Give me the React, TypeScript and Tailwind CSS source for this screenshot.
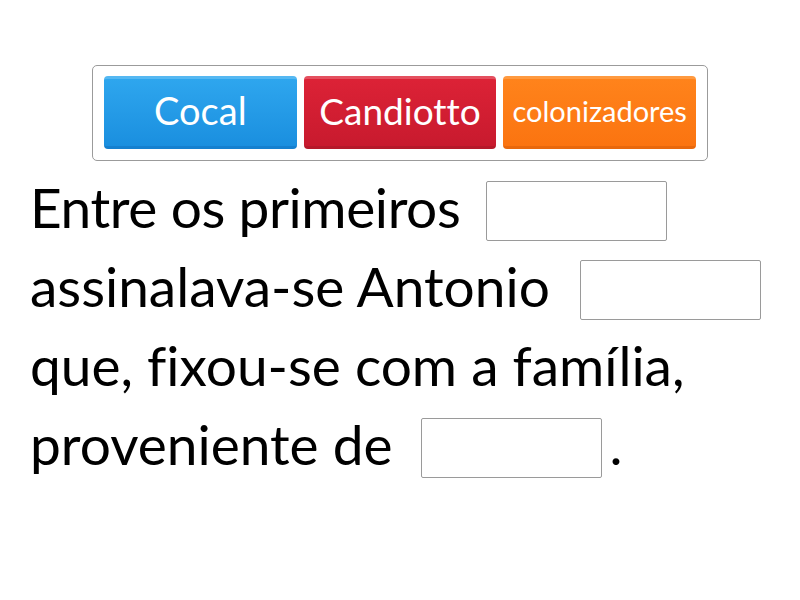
import React from 'react';

const words = [
  { label: 'Cocal', cls: 'bg-gradient-to-b from-[#2ea6ee] to-[#1a8fdf] border-t-[#55b8f2] border-b-[#1580cf]', size: 'text-[38px]' },
  { label: 'Candiotto', cls: 'bg-gradient-to-b from-[#dc2236] to-[#c81a2e] border-t-[#e4505f] border-b-[#b5192a]', size: 'text-[37px]' },
  { label: 'colonizadores', cls: 'bg-gradient-to-b from-[#ff831b] to-[#fb7410] border-t-[#ff9a40] border-b-[#e8680c]', size: 'text-[29px]' },
];

const Blank = () => (
  <span className="inline-block w-[181px] h-[60px] border border-[#9a9a9a] rounded-[2px] bg-white shrink-0" />
);

const App = () => {
  return (
    <div className="w-[800px] h-[600px] bg-white font-['Lato',sans-serif] text-black [font-variant-ligatures:none]">
      <div className="pt-[65px] flex justify-center">
        <div className="w-[616px] h-[96px] border border-[#9b9b9b] rounded-[5px] px-[11px] py-[10px] flex gap-[7px]">
          {words.map((w) => (
            <div
              key={w.label}
              className={`flex-1 h-[73px] rounded-[4px] border-t-[3px] border-b-[3px] flex items-center justify-center pb-[5px] leading-none text-white ${w.cls} ${w.size}`}
            >
              {w.label}
            </div>
          ))}
        </div>
      </div>
      <div className="pl-[30px] pt-[14px] text-[55px] leading-none">
        <div className="h-[79px] flex items-center">
          <span className="pb-[14px] tracking-[-0.4px]">Entre os primeiros</span>
          <span className="ml-[26px]"><Blank /></span>
        </div>
        <div className="h-[79px] flex items-center">
          <span className="pb-[14px]">assinalava-se Antonio</span>
          <span className="ml-[30px]"><Blank /></span>
        </div>
        <div className="h-[79px] flex items-center">
          <span className="pb-[14px]">que, fixou-se com a família,</span>
        </div>
        <div className="h-[79px] flex items-center">
          <span className="pb-[14px]">proveniente de</span>
          <span className="ml-[28px] mr-[8px]"><Blank /></span>
          <span className="pb-[14px]">.</span>
        </div>
      </div>
    </div>
  );
};

export default App;
